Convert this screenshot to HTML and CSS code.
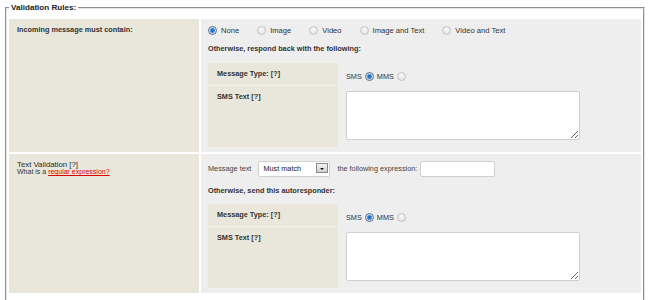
FILE: index.html
```html
<!DOCTYPE html>
<html lang="en">
<head>
  <meta charset="UTF-8">
  <title>Validation Rules</title>
  <link rel="stylesheet" href="styles.css">
</head>
<body>
  <fieldset class="rules">
    <legend>Validation Rules:</legend>

    <div class="rules-grid">
      <!-- incoming message -->
      <div class="rule-label">
        <b>Incoming message must contain:</b>
      </div>
      <div class="rule-body">
        <div class="media-options">
          <label class="option"><input type="radio" class="radio" name="media" checked> None</label>
          <label class="option"><input type="radio" class="radio" name="media"> Image</label>
          <label class="option"><input type="radio" class="radio" name="media"> Video</label>
          <label class="option"><input type="radio" class="radio" name="media"> Image and Text</label>
          <label class="option"><input type="radio" class="radio" name="media"> Video and Text</label>
        </div>
        <div class="sub-title">Otherwise, respond back with the following:</div>
        <div class="reply-grid">
          <div class="reply-label first">Message Type: [?]</div>
          <div class="reply-type">
            SMS <input type="radio" class="radio" name="type1" checked> MMS <input type="radio" class="radio" name="type1">
          </div>
          <div class="reply-label">SMS Text [?]</div>
          <div class="reply-text"><textarea></textarea></div>
        </div>
      </div>

      <!-- text validation -->
      <div class="rule-label">
        <div class="label-title">Text Validation [?]</div>
        <div class="label-help">What is a <a href="#">regular expression?</a></div>
      </div>
      <div class="rule-body">
        <div class="match-row">
          <span>Message text</span>
          <div class="select-wrap">
            <select class="match-select">
              <option>Must match</option>
              <option>Must not match</option>
            </select>
            <span class="select-btn"></span>
          </div>
          <span class="expr-label">the following expression:</span>
          <input type="text" class="expr-input">
        </div>
        <div class="sub-title second">Otherwise, send this autoresponder:</div>
        <div class="reply-grid">
          <div class="reply-label first">Message Type: [?]</div>
          <div class="reply-type">
            SMS <input type="radio" class="radio" name="type2" checked> MMS <input type="radio" class="radio" name="type2">
          </div>
          <div class="reply-label">SMS Text [?]</div>
          <div class="reply-text"><textarea></textarea></div>
        </div>
      </div>
    </div>
  </fieldset>
</body>
</html>
```

FILE: styles.css
```css
body {
  margin: 0;
  padding: 2px 7px 0 5px;
  font-family: "Liberation Sans", Arial, sans-serif;
  font-size: 7.3px;
  color: #333;
  background: #fff;
}

.rules {
  margin: 0;
  padding: 5px 2px 10px 2px;
  border: 2px groove #e4e4e4;
}

.rules legend {
  padding: 0 2px;
  font-size: 8.1px;
  font-weight: bold;
  line-height: 12px;
  color: #222;
}

.rules-grid {
  display: grid;
  grid-template-columns: 190px 1fr;
  gap: 2px;
}

.rule-label {
  background-color: #e9e7dc;
  padding: 7px 8px;
  line-height: 7px;
}

.label-title {
  font-size: 7.8px;
  color: #2a2a2a;
}

.label-help {
  font-size: 7px;
}

.label-help a {
  color: #d00;
  text-decoration: underline;
}

.rule-body {
  background-color: #eee;
  padding: 6px 7px 5px;
}

.media-options {
  display: flex;
  align-items: center;
  gap: 18px;
  height: 11px;
  font-size: 7.6px;
}

.option {
  display: flex;
  align-items: center;
  gap: 4px;
}

.radio {
  appearance: none;
  -webkit-appearance: none;
  width: 9px;
  height: 9px;
  margin: 0;
  border: 1px solid #c4c4c4;
  border-radius: 50%;
  background: radial-gradient(circle at 50% 35%, #fafafa, #dcdcdc);
  vertical-align: middle;
}

.radio:checked {
  border-color: #5e6e82;
  background: radial-gradient(circle, #1c6cc0 0, #2b7ad0 1.8px, #a8c9ea 2.6px, #e9eef4 3.6px);
}

.sub-title {
  font-weight: bold;
  line-height: 8px;
  margin: 9px 0 10px;
}

.sub-title.second {
  margin: 10px 0 9px;
}

.reply-grid {
  display: grid;
  grid-template-columns: 130px 1fr;
  column-gap: 8px;
}

.reply-label {
  background-color: #e9e7dc;
  padding: 7px 9px;
  font-weight: bold;
  line-height: 8px;
}

.reply-label.first {
  border-bottom: 1px solid #f3f1ea;
}

.reply-type {
  display: flex;
  align-items: center;
  gap: 3px;
  font-size: 7.3px;
  padding-top: 4px;
}

.reply-text {
  padding: 5px 0 7px;
}

.reply-text textarea {
  display: block;
  box-sizing: border-box;
  width: 234px;
  height: 49px;
  margin: 0;
  border: 1px solid #d0d0d0;
  border-radius: 2px;
  background: #fff;
}

.match-row {
  display: flex;
  align-items: center;
  height: 17px;
  color: #444;
}

.select-wrap {
  position: relative;
  margin-left: 7px;
}

.match-select {
  appearance: none;
  -webkit-appearance: none;
  display: block;
  box-sizing: border-box;
  width: 72px;
  height: 16px;
  margin: 0;
  padding: 0 0 0 4px;
  border: 1px solid #d0d0d0;
  border-radius: 2px;
  background: #fff;
  font-family: inherit;
  font-size: 7.3px;
  color: #222;
}

.select-btn {
  position: absolute;
  top: 2px;
  right: 2px;
  width: 12px;
  height: 10px;
  box-sizing: border-box;
  border: 1px solid #8a8a8a;
  background: linear-gradient(#f4f4f4, #cfcfcf);
  pointer-events: none;
}

.select-btn::after {
  content: "";
  position: absolute;
  left: 3px;
  top: 4px;
  border-left: 2.5px solid transparent;
  border-right: 2.5px solid transparent;
  border-top: 2.5px solid #111;
}

.expr-label {
  margin-left: 7px;
}

.expr-input {
  box-sizing: border-box;
  width: 75px;
  height: 16px;
  margin: 0 0 0 3px;
  border: 1px solid #d0d0d0;
  border-radius: 2px;
  background: #fff;
}
```
